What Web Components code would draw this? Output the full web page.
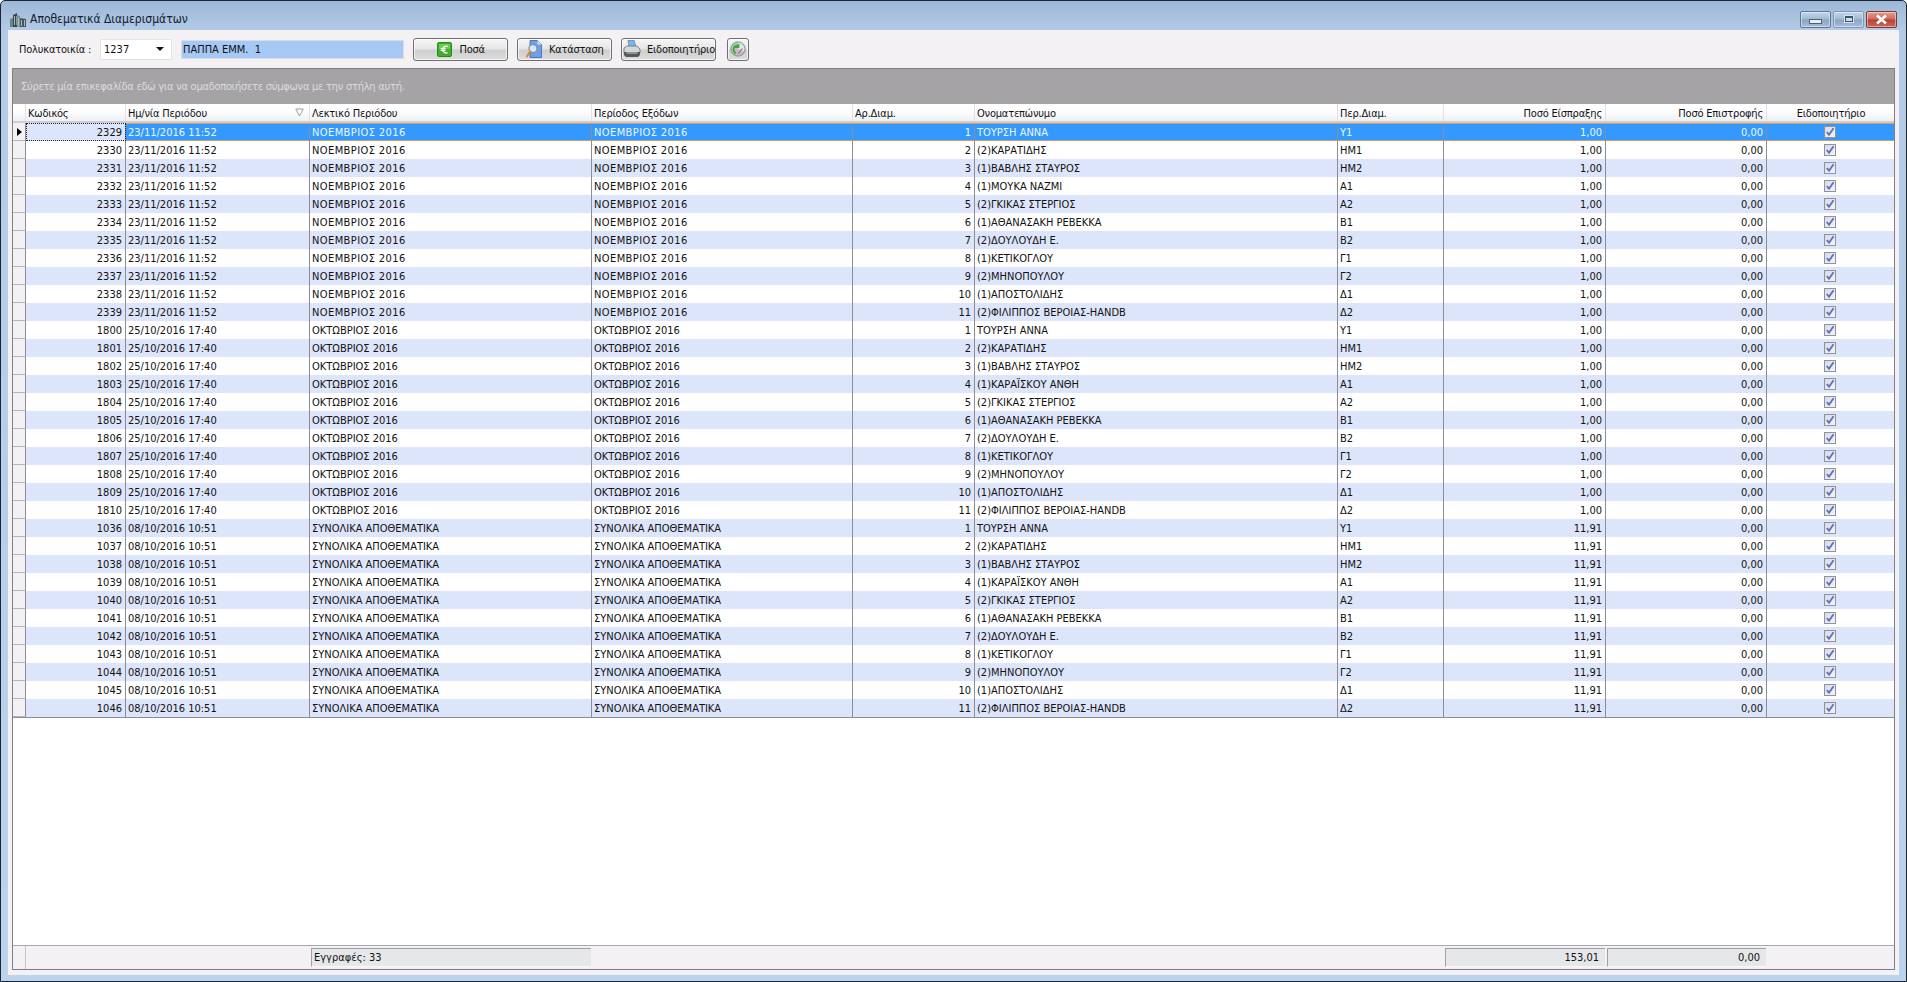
<!DOCTYPE html>
<html lang="el">
<head>
<meta charset="utf-8">
<title>Αποθεματικά Διαμερισμάτων</title>
<style>
  html, body { margin: 0; height: 100%; overflow: hidden; }
  body { font: condensed 11px "DejaVu Sans", sans-serif; color: #111; }
</style>
</head>
<body>
<app-window></app-window>

<script>
const FONT = `"DejaVu Sans", "Liberation Sans", sans-serif`

const ICONS = {
  building: `<svg width="16" height="14" viewBox="0 0 16 14"><path d="M0 14V6l3-1v9z" fill="#5f8a86"/><path d="M3 14V2l4-2v14z" fill="#39474d"/><path d="M7 14V2l3 1v11z" fill="#7f9297"/><path d="M10 14V5l6 1v8z" fill="#46565c"/><path d="M4 3h1v9H4zM6 3h.7v9H6zM8 5h1v8H8zM11 7h1v6h-1zM14 7h1v6h-1z" fill="#a8bcc0"/></svg>`,
  euro: `<svg width="15" height="15" viewBox="0 0 15 15"><rect x=".5" y=".5" width="14" height="14" rx="1.5" fill="#3fae2a" stroke="#2a8a1c"/><rect x="2" y="2" width="11" height="5" fill="#7fd765" opacity=".7"/><path d="M10.6 4.4a3.4 3.4 0 1 0 0 6.2M3.6 6.6h5M3.6 8.4h5" fill="none" stroke="#fff" stroke-width="1.3"/></svg>`,
  report: `<svg width="16" height="18" viewBox="0 0 16 18"><path d="M4 .5h7.5l4 4v13H4z" fill="#6f9fe6" stroke="#3a66b5" stroke-width=".8"/><path d="M11.5.5v4h4z" fill="#d5e4fa"/><circle cx="7" cy="8.5" r="4" fill="#dbe9fb" stroke="#8593a8" stroke-width="1.3"/><path d="M4.2 11.6.8 16.5" stroke="#d8862c" stroke-width="2" stroke-linecap="round"/></svg>`,
  printer: `<svg width="18" height="18" viewBox="0 0 18 18"><path d="M5 0h6l2 7H6z" fill="#7fb2e8" stroke="#4d7fb5" stroke-width=".7"/><path d="M1 8l3-2h10l3 3v4H1z" fill="#d4d6d8" stroke="#6b6f73" stroke-width=".8"/><path d="M1 12h16v3l-2 2H3l-2-2z" fill="#55585c"/><path d="M3.5 13h11" stroke="#c9ccce"/></svg>`,
  refresh: `<svg width="16" height="16" viewBox="0 0 18 18"><circle cx="9" cy="9" r="8" fill="#b9c3cc" stroke="#77828c"/><path d="M9 1.8a7.2 7.2 0 0 1 6.6 10L9 9z" fill="#dfe6ec"/><path d="M3 9a6 6 0 0 1 6-5l1.5-1.6V8H5l1.8-1.7A3.6 3.6 0 0 0 5.2 10a3.8 3.8 0 0 0 2 3l-1 1.8A6 6 0 0 1 3 9z" fill="#45a92f"/><path d="M9 14.5l5-6" stroke="#d65b4a" stroke-width="1.3"/></svg>`,
  tick: `<svg width="10" height="10" viewBox="0 0 11 11"><path d="M2 5.5l2.4 3L9.4 1.4" fill="none" stroke="#5a6fc0" stroke-width="2"/></svg>`
}

class TitleBar extends HTMLElement {
  connectedCallback () {
    this.attachShadow({ mode: 'open' }).innerHTML = /* html */`
    <style>
      :host { display: flex; align-items: center; height: 29px; padding: 0 2px 0 2px; }
      .icon { display: flex; margin-right: 4px; margin-top: 8px; }
      .text { font: condensed 12px ${FONT}; color: #10202f; flex: 1; padding-top: 7px; }
      .buttons { display: flex; gap: 2px; margin-top: 7px; }
      .b { box-sizing: border-box; width: 31px; height: 17px; border: 1px solid #5d7692; border-radius: 2px;
        background: linear-gradient(#c3d5ea, #a2b9d3 48%, #8ba4c2 52%, #a6bdd8);
        display: flex; align-items: center; justify-content: center;
        box-shadow: inset 0 0 0 1px rgba(255,255,255,.45); }
      .b.max { border-color: #7f97b2; }
      .b.close { border-color: #7b3a34;
        background: linear-gradient(#e49c90, #cf6a5d 48%, #b94034 52%, #c5675b); }
      .min-g { width: 11px; height: 3px; background: #e8edf3; border: 1px solid #4c6078; margin-top: 4px; box-sizing: content-box; }
      .max-g { width: 6px; height: 3px; border: 1px solid #3f5268; border-top-width: 2px; background: #cfdceb; outline: 1px solid #d9e3ee; }
      svg { display: block; }
    </style>
    <span class="icon">${ICONS.building}</span>
    <span class="text"><slot></slot></span>
    <div class="buttons">
      <div class="b"><i class="min-g"></i></div>
      <div class="b max"><i class="max-g"></i></div>
      <div class="b close"><svg width="15" height="11" viewBox="0 0 15 11"><path d="M3 1.5l9 8M12 1.5l-9 8" stroke="#fff" stroke-width="2.6"/></svg></div>
    </div>`
  }
}

class ToolButton extends HTMLElement {
  connectedCallback () {
    const icon = this.getAttribute('icon')
    this.attachShadow({ mode: 'open' }).innerHTML = /* html */`
    <style>
      :host { display: flex; align-items: center; box-sizing: border-box; width: 95px; height: 23px;
        border: 1px solid #6f6f72; border-radius: 3px;
        background: linear-gradient(#f6f6f6, #e6e6e6 45%, #cfcfcf 55%, #dcdcdc);
        box-shadow: inset 0 0 0 1px rgba(255,255,255,.7);
        font: condensed 11px ${FONT}; letter-spacing: -.25px; color: #111; }
      :host([compact]) { width: 22px; justify-content: center; }
      .icon { display: flex; flex: none; justify-content: center; width: var(--iw, 44px); margin-left: var(--il, 0); }
      svg { display: block; }
      .t { white-space: nowrap; }
    </style>
    <span class="icon">${ICONS[icon]}</span><span class="t"><slot></slot></span>`
  }
}

class ToolBar extends HTMLElement {
  connectedCallback () {
    this.attachShadow({ mode: 'open' }).innerHTML = /* html */`
    <style>
      :host { display: flex; align-items: center; height: 38px; padding-left: 7px; box-sizing: border-box; font: condensed 11px ${FONT}; }
      .label { width: 81px; color: #111; padding-top: 1px; letter-spacing: -.2px; }
      .combo { box-sizing: border-box; width: 72px; height: 21px; background: #fff; border: 1px solid #e3e3e6;
        display: flex; align-items: center; justify-content: space-between; padding: 0 7px 0 3px; margin-right: 9px; }
      .arrow { width: 0; height: 0; border: 4px solid transparent; border-top: 4px solid #111; border-bottom: 0; }
      .name { box-sizing: border-box; width: 223px; height: 19px; background: #a5c8f5; border: 1px solid #dcdce2;
        display: flex; align-items: center; padding-left: 1px; margin-right: 9px; white-space: pre; }
      .buttons { display: flex; gap: 9px; }
      tool-button:last-child { margin-left: 2px; }
    </style>
    <span class="label">Πολυκατοικία :</span>
    <div class="combo"><span>1237</span><i class="arrow"></i></div>
    <div class="name">ΠΑΠΠΑ ΕΜΜ.  1</div>
    <div class="buttons">
      <tool-button icon="euro" style="--iw:31px;--il:14.5px">Ποσά</tool-button>
      <tool-button icon="report" style="--iw:30px;--il:1px">Κατάσταση</tool-button>
      <tool-button icon="printer" style="--iw:30px;--il:-5px">Ειδοποιητήριο</tool-button>
      <tool-button icon="refresh" compact style="--iw:20px"></tool-button>
    </div>`
  }
}

// στήλες του πίνακα
const COLS = '13px 100px 184px 282px 261px 122px 363px 106px 162px 161px 128px'

const TENANTS = [
  ['ΤΟΥΡΣΗ ΑΝΝΑ', 'Υ1'], ['(2)ΚΑΡΑΤΙΔΗΣ', 'ΗΜ1'], ['(1)ΒΑΒΛΗΣ ΣΤΑΥΡΟΣ', 'ΗΜ2'],
  ['(1)ΚΑΡΑΪΣΚΟΥ ΑΝΘΗ', 'Α1'], ['(2)ΓΚΙΚΑΣ ΣΤΕΡΓΙΟΣ', 'Α2'], ['(1)ΑΘΑΝΑΣΑΚΗ ΡΕΒΕΚΚΑ', 'Β1'],
  ['(2)ΔΟΥΛΟΥΔΗ Ε.', 'Β2'], ['(1)ΚΕΤΙΚΟΓΛΟΥ', 'Γ1'], ['(2)ΜΗΝΟΠΟΥΛΟΥ', 'Γ2'],
  ['(1)ΑΠΟΣΤΟΛΙΔΗΣ', 'Δ1'], ['(2)ΦΙΛΙΠΠΟΣ ΒΕΡΟΙΑΣ-HANDB', 'Δ2']
]

const PERIODS = [
  { from: 2329, date: '23/11/2016 11:52', period: 'ΝΟΕΜΒΡΙΟΣ 2016', amount: '1,00', ls: '.4px' },
  { from: 1800, date: '25/10/2016 17:40', period: 'ΟΚΤΩΒΡΙΟΣ 2016', amount: '1,00', ls: '0' },
  { from: 1036, date: '08/10/2016 10:51', period: 'ΣΥΝΟΛΙΚΑ ΑΠΟΘΕΜΑΤΙΚΑ', amount: '11,91', ls: '0' }
]

class GridRow extends HTMLElement {
  set data (d) {
    this.attachShadow({ mode: 'open' }).innerHTML = /* html */`
    <style>
      :host { display: grid; grid-template-columns: ${COLS}; height: 18px; box-sizing: border-box; font: condensed 11px ${FONT}; color: #111; background: #fff; }
      :host([alt]) { background: #dde5fb; }
      :host([selected]) { background: #3399ff; color: #eef6ff; box-shadow: inset 0 1px 0 #d2a05a, inset 0 -1px 0 #d2a05a; }
      div { box-sizing: border-box; border-right: 1px solid #8c8c96; padding: 0 2px; line-height: 20px; white-space: nowrap; overflow: hidden; }
      .ind { background: #f4f1f5; border-bottom: 1px solid #b5b5ba; border-right: 1px solid #8c8c96; padding: 0; display: flex; align-items: center; justify-content: center; box-shadow: none; }
      .ind i { width: 0; height: 0; border: 4px solid transparent; border-left: 5px solid #000; border-right: 0; }
      .r { text-align: right; padding-right: 3px; }
      .p { letter-spacing: ${d.ls}; }
      .focus { background: #dde5fb; color: #111; outline: 1px dotted #222; outline-offset: -1px; }
      .chk { display: flex; justify-content: center; align-items: center; border-right: 0; padding: 0 3px 0 0; }
      .box { width: 12px; height: 12px; box-sizing: border-box; border: 1px solid #8f939d; background: linear-gradient(135deg, #d9dbe3, #f4f4f7);
        display: flex; align-items: center; justify-content: center; padding: 0; overflow: visible; }
      svg { display: block; }
    </style>
    <div class="ind">${d.selected ? '<i></i>' : ''}</div>
    <div class="r ${d.selected ? 'focus' : ''}">${d.code}</div>
    <div>${d.date}</div>
    <div class="p">${d.period}</div>
    <div class="p">${d.period}</div>
    <div class="r">${d.no}</div>
    <div>${d.name}</div>
    <div>${d.part}</div>
    <div class="r">${d.amount}</div>
    <div class="r">0,00</div>
    <div class="chk"><div class="box">${ICONS.tick}</div></div>`
  }
}

class DataGrid extends HTMLElement {
  connectedCallback () {
    const root = this.attachShadow({ mode: 'open' })
    root.innerHTML = /* html */`
    <style>
      :host { display: flex; flex-direction: column; flex: 1; min-height: 0; background: #fff; border: 1px solid #7e7e86; box-sizing: border-box; font: condensed 11px ${FONT}; }
      .group { height: 35px; background: #a5a3a6; color: #dcdcde; display: flex; align-items: center; padding-left: 8px; flex: none; letter-spacing: -.25px; }
      .head { display: grid; grid-template-columns: ${COLS}; height: 19px; flex: none; background: linear-gradient(#fff, #fdfdfe 45%, #eff0f6); border-bottom: 2px solid #cfcfd2; box-sizing: border-box; letter-spacing: -.2px; }
      .head div { box-sizing: border-box; border-right: 1px solid #e2e2e6; padding: 0 2px; line-height: 20px; height: 17px; overflow: hidden; position: relative; white-space: nowrap; }
      .head .r { text-align: right; padding-right: 3px; }
      .head .c { text-align: center; border-right: 0; }
      .sort { position: absolute; right: 5px; top: 4px; }
      .rows { flex: 1; min-height: 0; border-bottom: 0; }
      .rows-end { height: 1px; background: #8c8c96; }
      .foot { display: grid; grid-template-columns: ${COLS}; flex: none; height: 24px; background: #f4f1f5; border-top: 1px solid #a8a8ac; box-sizing: border-box; }
      .foot > div { border-right: 0; }
      .foot .first { border-right: 1px solid #c4c4c8; grid-column: 1; }
      .cell { margin: 2px 1px; background: #e5e7ea; border: 1px solid; border-color: #9fa0a3 #f8f8f8 #f8f8f8 #9fa0a3; line-height: 17px; padding: 0 2px; white-space: nowrap; }
      .cell.r { text-align: right; padding-right: 6px; }
    </style>
    <div class="group">Σύρετε μία επικεφαλίδα εδώ για να ομαδοποιήσετε σύμφωνα με την στήλη αυτή.</div>
    <div class="head">
      <div></div>
      <div>Κωδικός</div>
      <div>Ημ/νία Περιόδου<svg class="sort" width="9" height="9" viewBox="0 0 9 9"><path d="M.8 1h7.4L4.5 8z" fill="#fff" stroke="#9a9aa0"/></svg></div>
      <div>Λεκτικό Περιόδου</div>
      <div>Περίοδος Εξόδων</div>
      <div>Αρ.Διαμ.</div>
      <div>Ονοματεπώνυμο</div>
      <div>Περ.Διαμ.</div>
      <div class="r">Ποσό Είσπραξης</div>
      <div class="r">Ποσό Επιστροφής</div>
      <div class="c">Ειδοποιητήριο</div>
    </div>
    <div class="rows"></div>
    <div class="foot">
      <div class="first"></div>
      <div></div><div></div>
      <div class="cell">Εγγραφές: 33</div>
      <div></div><div></div><div></div><div></div>
      <div class="cell r">153,01</div>
      <div class="cell r">0,00</div>
      <div></div>
    </div>`

    const rows = root.querySelector('.rows')
    let i = 0
    PERIODS.forEach(p => {
      TENANTS.forEach((t, n) => {
        const row = document.createElement('grid-row')
        const name = (p.from === 2329 && n === 3) ? '(1)ΜΟΥΚΑ ΝΑΖΜΙ' : t[0]
        if (i === 0) row.setAttribute('selected', '')
        else if (i % 2 === 0) row.setAttribute('alt', '')
        row.data = { selected: i === 0, code: p.from + n, date: p.date, period: p.period, amount: p.amount, ls: p.ls, no: n + 1, name, part: t[1] }
        rows.appendChild(row)
        i++
      })
    })
    const end = document.createElement('div')
    end.className = 'rows-end'
    rows.appendChild(end)
  }
}

class AppWindow extends HTMLElement {
  connectedCallback () {
    this.attachShadow({ mode: 'open' }).innerHTML = /* html */`
    <style>
      :host { display: flex; flex-direction: column; box-sizing: border-box; height: 982px; width: 1907px;
        background: linear-gradient(#9db8d8, #b3cbe6 30px, #bcd3ee);
        border: 1px solid #1b2530; border-radius: 5px 5px 0 0; padding: 0 7px 6px 7px; }
      .client { flex: 1; min-height: 0; display: flex; flex-direction: column; background: #f4f1f5; padding: 0 4px 5px 4px; }
    </style>
    <title-bar>Αποθεματικά Διαμερισμάτων</title-bar>
    <div class="client">
      <tool-bar></tool-bar>
      <data-grid></data-grid>
    </div>`
  }
}

customElements.define('title-bar', TitleBar)
customElements.define('tool-button', ToolButton)
customElements.define('tool-bar', ToolBar)
customElements.define('grid-row', GridRow)
customElements.define('data-grid', DataGrid)
customElements.define('app-window', AppWindow)
</script>
</body>
</html>
